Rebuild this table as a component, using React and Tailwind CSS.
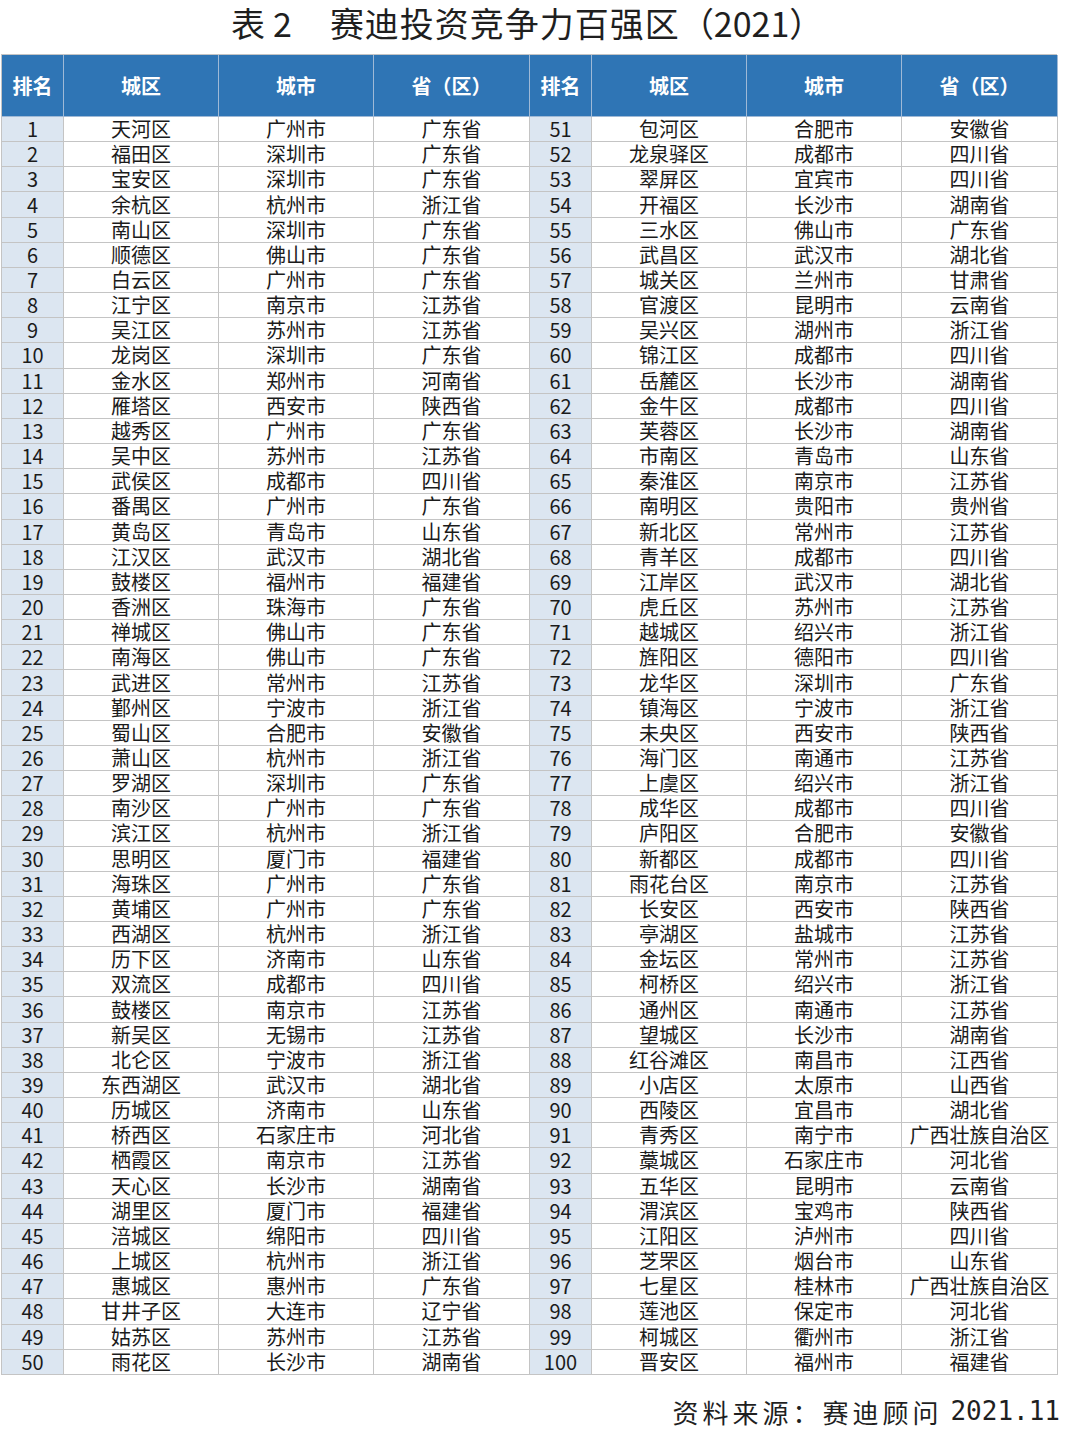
const left = [
  ['天河区', '广州市', '广东省'], ['福田区', '深圳市', '广东省'], ['宝安区', '深圳市', '广东省'],
  ['余杭区', '杭州市', '浙江省'], ['南山区', '深圳市', '广东省'], ['顺德区', '佛山市', '广东省'],
  ['白云区', '广州市', '广东省'], ['江宁区', '南京市', '江苏省'], ['吴江区', '苏州市', '江苏省'],
  ['龙岗区', '深圳市', '广东省'], ['金水区', '郑州市', '河南省'], ['雁塔区', '西安市', '陕西省'],
  ['越秀区', '广州市', '广东省'], ['吴中区', '苏州市', '江苏省'], ['武侯区', '成都市', '四川省'],
  ['番禺区', '广州市', '广东省'], ['黄岛区', '青岛市', '山东省'], ['江汉区', '武汉市', '湖北省'],
  ['鼓楼区', '福州市', '福建省'], ['香洲区', '珠海市', '广东省'], ['禅城区', '佛山市', '广东省'],
  ['南海区', '佛山市', '广东省'], ['武进区', '常州市', '江苏省'], ['鄞州区', '宁波市', '浙江省'],
  ['蜀山区', '合肥市', '安徽省'], ['萧山区', '杭州市', '浙江省'], ['罗湖区', '深圳市', '广东省'],
  ['南沙区', '广州市', '广东省'], ['滨江区', '杭州市', '浙江省'], ['思明区', '厦门市', '福建省'],
  ['海珠区', '广州市', '广东省'], ['黄埔区', '广州市', '广东省'], ['西湖区', '杭州市', '浙江省'],
  ['历下区', '济南市', '山东省'], ['双流区', '成都市', '四川省'], ['鼓楼区', '南京市', '江苏省'],
  ['新吴区', '无锡市', '江苏省'], ['北仑区', '宁波市', '浙江省'], ['东西湖区', '武汉市', '湖北省'],
  ['历城区', '济南市', '山东省'], ['桥西区', '石家庄市', '河北省'], ['栖霞区', '南京市', '江苏省'],
  ['天心区', '长沙市', '湖南省'], ['湖里区', '厦门市', '福建省'], ['涪城区', '绵阳市', '四川省'],
  ['上城区', '杭州市', '浙江省'], ['惠城区', '惠州市', '广东省'], ['甘井子区', '大连市', '辽宁省'],
  ['姑苏区', '苏州市', '江苏省'], ['雨花区', '长沙市', '湖南省'],
]

const right = [
  ['包河区', '合肥市', '安徽省'], ['龙泉驿区', '成都市', '四川省'], ['翠屏区', '宜宾市', '四川省'],
  ['开福区', '长沙市', '湖南省'], ['三水区', '佛山市', '广东省'], ['武昌区', '武汉市', '湖北省'],
  ['城关区', '兰州市', '甘肃省'], ['官渡区', '昆明市', '云南省'], ['吴兴区', '湖州市', '浙江省'],
  ['锦江区', '成都市', '四川省'], ['岳麓区', '长沙市', '湖南省'], ['金牛区', '成都市', '四川省'],
  ['芙蓉区', '长沙市', '湖南省'], ['市南区', '青岛市', '山东省'], ['秦淮区', '南京市', '江苏省'],
  ['南明区', '贵阳市', '贵州省'], ['新北区', '常州市', '江苏省'], ['青羊区', '成都市', '四川省'],
  ['江岸区', '武汉市', '湖北省'], ['虎丘区', '苏州市', '江苏省'], ['越城区', '绍兴市', '浙江省'],
  ['旌阳区', '德阳市', '四川省'], ['龙华区', '深圳市', '广东省'], ['镇海区', '宁波市', '浙江省'],
  ['未央区', '西安市', '陕西省'], ['海门区', '南通市', '江苏省'], ['上虞区', '绍兴市', '浙江省'],
  ['成华区', '成都市', '四川省'], ['庐阳区', '合肥市', '安徽省'], ['新都区', '成都市', '四川省'],
  ['雨花台区', '南京市', '江苏省'], ['长安区', '西安市', '陕西省'], ['亭湖区', '盐城市', '江苏省'],
  ['金坛区', '常州市', '江苏省'], ['柯桥区', '绍兴市', '浙江省'], ['通州区', '南通市', '江苏省'],
  ['望城区', '长沙市', '湖南省'], ['红谷滩区', '南昌市', '江西省'], ['小店区', '太原市', '山西省'],
  ['西陵区', '宜昌市', '湖北省'], ['青秀区', '南宁市', '广西壮族自治区'], ['藁城区', '石家庄市', '河北省'],
  ['五华区', '昆明市', '云南省'], ['渭滨区', '宝鸡市', '陕西省'], ['江阳区', '泸州市', '四川省'],
  ['芝罘区', '烟台市', '山东省'], ['七星区', '桂林市', '广西壮族自治区'], ['莲池区', '保定市', '河北省'],
  ['柯城区', '衢州市', '浙江省'], ['晋安区', '福州市', '福建省'],
]

const headers = ['排名', '城区', '城市', '省（区）', '排名', '城区', '城市', '省（区）']

function HeaderCell({ label }) {
  return (
    <div className="flex items-center justify-center bg-[#2f75b5] border-r border-b border-[#9fb9d6] text-[20px] font-bold text-white">
      {label}
    </div>
  )
}

function Cell({ children, rank }) {
  return (
    <div
      className={`flex items-center justify-center border-r border-b border-[#c4c4c4] text-[20px] leading-none text-[#1b1b1b] whitespace-nowrap ${
        rank ? 'bg-[#dce6f1]' : 'bg-white'
      }`}
    >
      {children}
    </div>
  )
}

export default function App() {
  return (
    <div
      className="w-[1080px] h-[1436px] bg-white"
      style={{ fontFamily: '"Noto Sans CJK SC", "Noto Sans", sans-serif' }}
    >
      <div className="h-[54px] flex items-start pt-[1px] pl-[231px] text-[34px] leading-[44px] text-[#1f1f1f] whitespace-nowrap">
        <span>表</span>
        <span className="ml-[8px]">2</span>
        <span className="ml-[38px] tracking-[1px]">赛迪投资竞争力百强区</span>
        <span>（2021）</span>
      </div>

      <div className="ml-px w-[1056px] border-l border-t border-[#c4c4c4] grid grid-cols-[62px_155px_155px_156px_62px_155px_155px_156px] grid-rows-[62px_repeat(50,25.16px)]">
        {headers.map((h, i) => (
          <HeaderCell key={i} label={h} />
        ))}
        {left.map((row, i) => {
          const r = right[i]
          return [
            <Cell key={`a${i}`} rank>{i + 1}</Cell>,
            <Cell key={`b${i}`}>{row[0]}</Cell>,
            <Cell key={`c${i}`}>{row[1]}</Cell>,
            <Cell key={`d${i}`}>{row[2]}</Cell>,
            <Cell key={`e${i}`} rank>{i + 51}</Cell>,
            <Cell key={`f${i}`}>{r[0]}</Cell>,
            <Cell key={`g${i}`}>{r[1]}</Cell>,
            <Cell key={`h${i}`}>{r[2]}</Cell>,
          ]
        })}
      </div>

      <div className="flex justify-end items-center h-[74px] pr-[20px]">
        <span className="text-[26px] text-[#1f1f1f] tracking-[4px]">资料来源：赛迪顾问</span>
        <span
          className="ml-[8px] text-[26px] text-[#1f1f1f]"
          style={{ fontFamily: '"DejaVu Sans Mono", monospace' }}
        >
          2021.11
        </span>
      </div>
    </div>
  )
}
